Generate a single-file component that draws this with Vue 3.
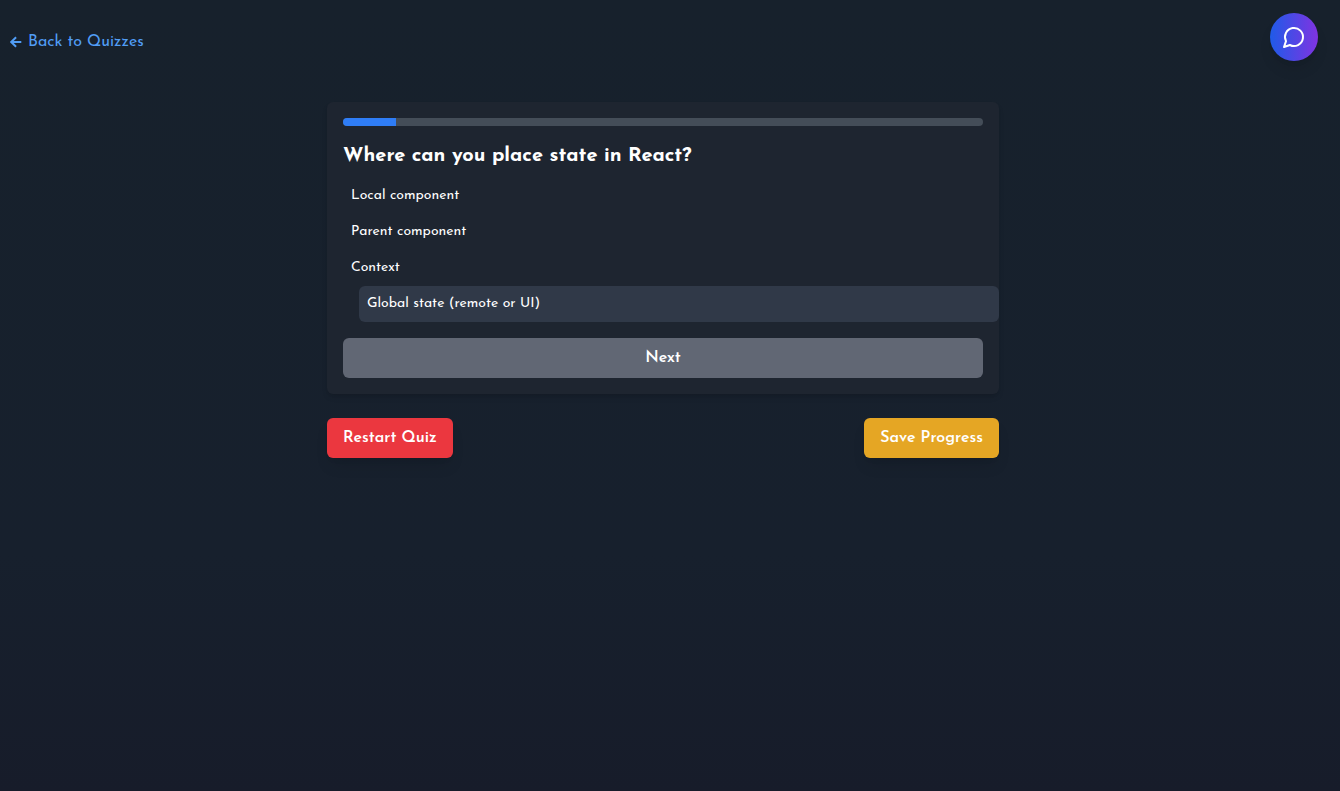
<script setup>
import { ref, computed } from 'vue'

const current = ref(1)
const total = 12
const progress = computed(() => (current.value / total) * 100)
const selected = ref(3)
const options = ['Local component', 'Parent component', 'Context', 'Global state (remote or UI)']

function restart() {
  current.value = 1
  selected.value = -1
}
</script>

<template>
  <div class="page">
    <header class="topbar">
      <a class="back" href="#quizzes">
        <svg viewBox="0 0 12 12" aria-hidden="true">
          <path d="M11.3 6H1.6M6.1 1.3 1.2 6l4.9 4.7" />
        </svg>
        <span>Back to Quizzes</span>
      </a>
      <button class="chat" type="button" aria-label="Open chat">
        <svg viewBox="0 0 24 24" aria-hidden="true">
          <path d="M7.9 20A9 9 0 1 0 4 16.1L2 22Z" />
        </svg>
      </button>
    </header>

    <main class="quiz">
      <section class="card">
        <div class="track">
          <div class="fill" :style="{ width: progress + '%' }"></div>
        </div>
        <h1>Where can you place state in React?</h1>
        <ul class="options">
          <li v-for="(option, i) in options" :key="option">
            <button
              type="button"
              class="option"
              :class="{ selected: selected === i }"
              :aria-pressed="selected === i"
              @click="selected = i"
            >{{ option }}</button>
          </li>
        </ul>
        <button class="btn next" type="button">Next</button>
      </section>
      <div class="actions">
        <button class="btn restart" type="button" @click="restart">Restart Quiz</button>
        <button class="btn save" type="button">Save Progress</button>
      </div>
    </main>
  </div>
</template>

<style>
body {
  margin: 0;
  background: #171c2a;
}
</style>

<style scoped>
.page {
  box-sizing: border-box;
  min-height: 100vh;
  padding-right: 14px;
  background: linear-gradient(to bottom, #17212c, #17202d 70%, #171c2a);
  color: #fff;
  font-family: "Josefin Sans", Lato, sans-serif;
}
button {
  border: 0;
  margin: 0;
  color: inherit;
  font-family: inherit;
  cursor: pointer;
}
.topbar {
  display: flex;
  justify-content: space-between;
  align-items: flex-start;
  padding: 13px 8px 0 10px;
}
.back {
  display: flex;
  align-items: center;
  gap: 6px;
  margin-top: 17px;
  color: #519df5;
  font-size: 16px;
  line-height: 24px;
  text-decoration: none;
}
.back svg {
  width: 12px;
  height: 12px;
  fill: none;
  stroke: currentColor;
  stroke-width: 2;
}
.chat {
  display: flex;
  align-items: center;
  justify-content: center;
  width: 48px;
  height: 48px;
  padding: 0;
  border-radius: 50%;
  background: linear-gradient(to right, #1f5be8, #8033e2);
  box-shadow: 0 10px 15px -3px rgba(0, 0, 0, 0.1), 0 4px 6px -4px rgba(0, 0, 0, 0.1);
}
.chat svg {
  width: 24px;
  height: 24px;
  fill: none;
  stroke: #fff;
  stroke-width: 2;
  stroke-linecap: round;
  stroke-linejoin: round;
}
.quiz {
  max-width: 672px;
  margin: 41px auto 0;
}
.card {
  padding: 16px;
  border-radius: 6px;
  background: #1e2530;
  box-shadow: 0 4px 6px -1px rgba(0, 0, 0, 0.1), 0 2px 4px -2px rgba(0, 0, 0, 0.1);
}
.track {
  height: 8px;
  border-radius: 4px;
  overflow: hidden;
  background: #444d58;
}
.fill {
  height: 100%;
  background: #2f7df6;
}
h1 {
  margin: 16px 0 8px;
  font-size: 20px;
  line-height: 28px;
  font-weight: 700;
}
.options {
  margin: 0 0 16px;
  padding: 0;
  list-style: none;
}
.option {
  display: block;
  box-sizing: border-box;
  width: 100%;
  padding: 8px;
  border-radius: 6px;
  background: transparent;
  font-size: 14px;
  line-height: 20px;
  text-align: left;
}
.option.selected {
  position: relative;
  left: 16px;
  background: #303948;
}
.btn {
  padding: 8px 16px;
  border-radius: 6px;
  font-size: 16px;
  line-height: 24px;
  font-weight: 600;
}
.next {
  display: block;
  width: 100%;
  background: #616774;
}
.actions {
  display: flex;
  justify-content: space-between;
  margin-top: 24px;
}
.restart,
.save {
  box-shadow: 0 10px 15px -3px rgba(0, 0, 0, 0.1), 0 4px 6px -4px rgba(0, 0, 0, 0.1);
}
.restart {
  background: #eb373f;
}
.save {
  background: #e5a624;
}
</style>
